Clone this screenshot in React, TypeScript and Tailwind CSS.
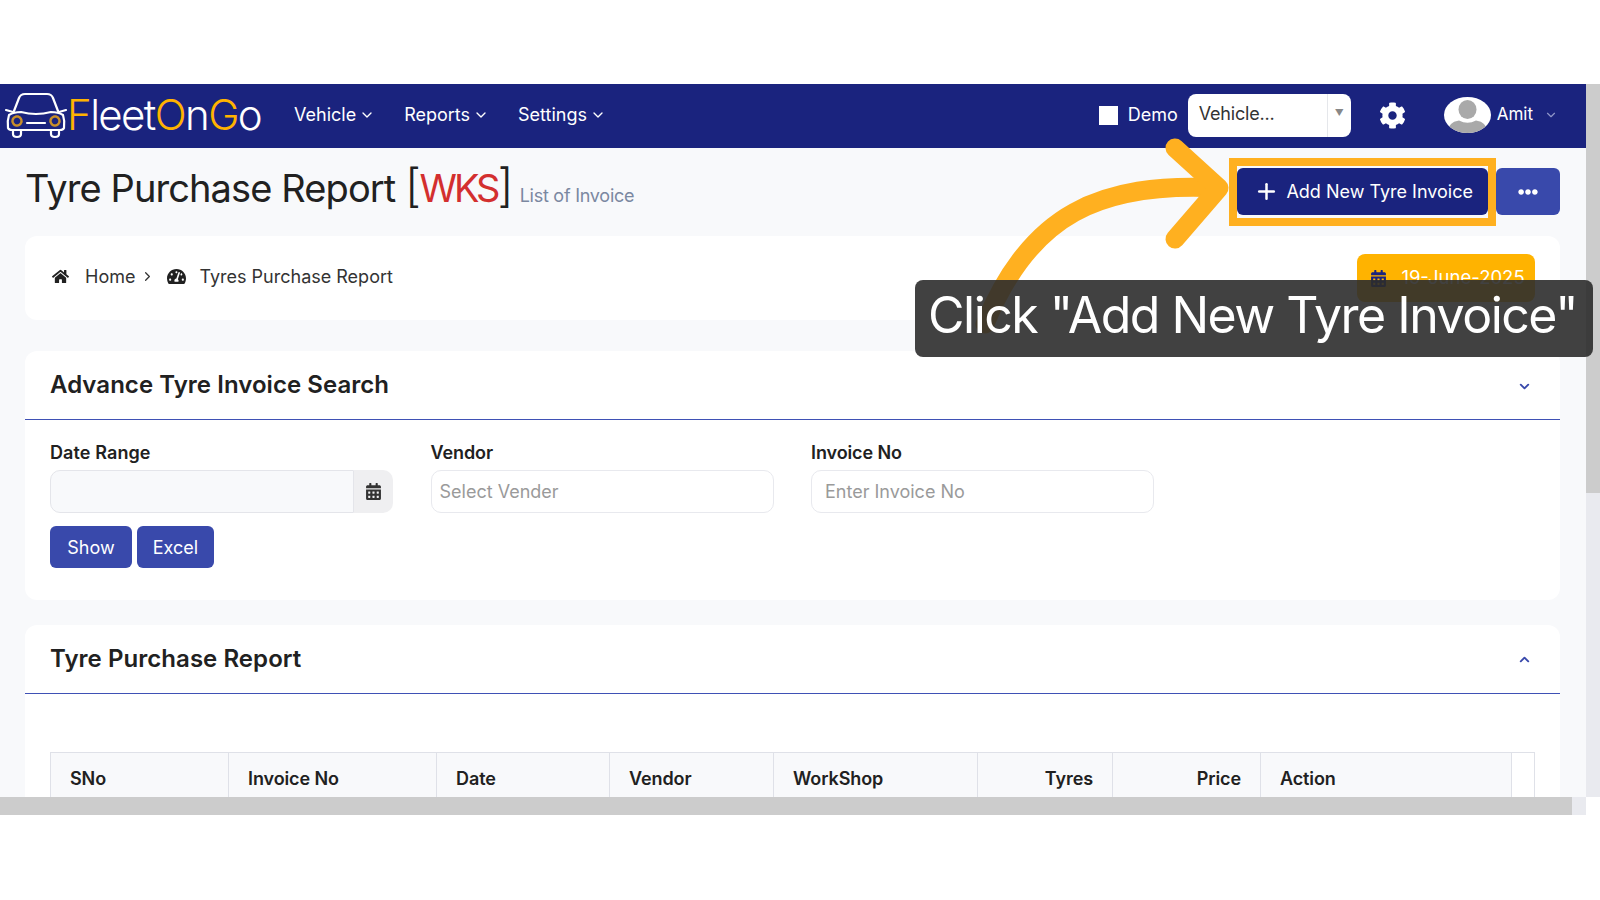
import React from "react";
import { FaHome, FaTachometerAlt, FaCalendarAlt, FaCog, FaEllipsisH } from "react-icons/fa";
import { ChevronDown, ChevronUp, ChevronRight, Plus } from "lucide-react";

const font = { fontFamily: "Inter, 'Liberation Sans', sans-serif" };

const columns = [
  { label: "SNo", width: "w-[178px]" },
  { label: "Invoice No", width: "w-[208px]" },
  { label: "Date", width: "w-[173px]" },
  { label: "Vendor", width: "w-[164px]" },
  { label: "WorkShop", width: "w-[204px]" },
  { label: "Tyres", width: "w-[135px]", right: true },
  { label: "Price", width: "w-[148px]", right: true },
  { label: "Action", width: "w-[251px]" },
];

function CarLogo() {
  return (
    <svg width="62" height="48" viewBox="0 0 62 48" fill="none" stroke="#fff" strokeWidth="2.2" strokeLinecap="round" strokeLinejoin="round">
      <path d="M9 20 L14 7 Q15.5 3 20 3 H42 Q46.5 3 48 7 L53 20" />
      <path d="M4 24 Q9 21 16 21 Q31 25 46 21 Q53 21 58 24 Q60 30 59 37 Q58 39 55 39 H7 Q4 39 3 37 Q2 30 4 24 Z" />
      <path d="M22 32 H40" />
      <path d="M8 39 V43 Q8 46 12 46 Q16 46 16 43 V39" />
      <path d="M46 39 V43 Q46 46 50 46 Q54 46 54 43 V39" />
      <path d="M1 19 L8 21 M61 19 L54 21" />
      <circle cx="12" cy="30" r="4.5" stroke="#c98f2a" strokeWidth="2.5" strokeDasharray="1.5 1" />
      <circle cx="50" cy="30" r="4.5" stroke="#c98f2a" strokeWidth="2.5" strokeDasharray="1.5 1" />
    </svg>
  );
}

function Avatar() {
  return (
    <svg className="w-[47px] h-[36px]" viewBox="0 0 47 36" preserveAspectRatio="none">
      <defs>
        <clipPath id="avatar-clip">
          <ellipse cx="23.5" cy="18" rx="23.5" ry="18" />
        </clipPath>
      </defs>
      <ellipse cx="23.5" cy="18" rx="23.5" ry="18" fill="#fff" />
      <g clipPath="url(#avatar-clip)" fill="#a9a9a9">
        <ellipse cx="23.5" cy="12.5" rx="9" ry="9.5" />
        <path d="M3 36 Q4 25 15 23.5 Q23.5 28 32 23.5 Q43 25 44 36 Z" />
      </g>
    </svg>
  );
}

function Navbar() {
  return (
    <nav className="h-[64px] shrink-0 bg-[#1a237e] flex items-center pl-[5px] pr-[28px] pb-[2px] text-white">
      <CarLogo />
      <div className="w-[195px] text-[42px] font-light leading-none tracking-[-1.6px] whitespace-nowrap">
        <span className="text-[#ffb300]">F</span>leet<span className="text-[#ffb300]">O</span>n<span className="text-[#ffb300]">G</span>o
      </div>
      <div className="ml-[32px] flex items-center gap-[29px] text-[18px]">
        {["Vehicle", "Reports", "Settings"].map((item) => (
          <span key={item} className="flex items-center gap-[3px] pb-[1px]">
            {item}
            <ChevronDown size={16} />
          </span>
        ))}
      </div>
      <div className="ml-auto flex items-center">
        <span className="w-[19px] h-[19px] bg-white" />
        <span className="ml-[10px] pb-[2px] text-[18px]">Demo</span>
        <div className="ml-[10px] w-[163px] h-[43px] bg-white rounded-lg flex items-center text-[#333] text-[18px]">
          <span className="flex-1 pl-[11px] pb-[3px] tracking-[-0.2px]">Vehicle...</span>
          <span className="w-[24px] h-full border-l border-gray-200 flex items-center justify-center pb-[4px] text-[9px] text-[#888]">▼</span>
        </div>
        <FaCog className="ml-[28px]" size={27} />
        <div className="ml-[38px]">
          <Avatar />
        </div>
        <span className="ml-[6px] text-[17px]">Amit</span>
        <ChevronDown className="ml-[11px] text-[#8f96c9]" size={14} />
      </div>
    </nav>
  );
}

function Panel({ title, open, children }: { title: string; open?: boolean; children: React.ReactNode }) {
  return (
    <section className="bg-white rounded-xl">
      <div className="h-[69px] border-b border-[#3f51b5] flex items-center justify-between pl-[25px] pr-[28px]">
        <h2 className="text-[24px] font-semibold text-[#212121] tracking-[0.05px]">{title}</h2>
        {open ? <ChevronUp size={15} strokeWidth={3} className="text-[#3949ab]" /> : <ChevronDown size={15} strokeWidth={3} className="mt-[3px] text-[#3949ab]" />}
      </div>
      {children}
    </section>
  );
}

function Field({ label, placeholder, indent }: { label: string; placeholder: string; indent: string }) {
  return (
    <div className="w-[343px]">
      <label className="block text-[18px] font-semibold text-[#212121] leading-[22px] tracking-[-0.1px]">{label}</label>
      <div className={`mt-[6px] h-[43px] bg-white border border-[#e8e9ee] rounded-[10px] flex items-center ${indent} text-[18px] text-[#9a9a9a]`}>
        {placeholder}
      </div>
    </div>
  );
}

export default function App() {
  return (
    <div className="w-full h-[900px] bg-white overflow-hidden" style={font}>
      <div className="h-[84px]" />
      <div className="relative h-[731px] flex flex-col">
        <div className="flex-1 min-h-0 flex">
          <main className="flex-1 min-w-0 bg-[#f8f9fb] flex flex-col overflow-hidden">
            <Navbar />
            <div className="relative pl-[25px] pr-[26px] flex-1">
              {/* Heading */}
              <div className="h-[88px] flex items-start justify-between">
                <div className="flex items-baseline mt-[14px] whitespace-nowrap">
                  <h1 className="text-[38px] leading-[50px] text-[#212121] tracking-[-0.9px]">
                    Tyre Purchase Report <span className="text-[46px] font-light leading-none tracking-[-1.6px]">[</span><span className="text-[#d32f2f] tracking-[-3px]">WKS</span><span className="text-[46px] font-light leading-none">]</span>
                  </h1>
                  <span className="ml-[7px] text-[18px] tracking-[-0.25px] text-[#7b88a1]">List of Invoice</span>
                </div>
                <div className="flex mt-[20px]">
                  <button className="w-[251px] h-[47px] mr-[8px] pr-[15px] bg-[#1a237e] rounded-md text-white text-[18px] flex items-center justify-end gap-[7px]">
                    <Plus size={25} strokeWidth={2.4} />
                    Add New Tyre Invoice
                  </button>
                  <button className="w-[64px] h-[47px] bg-[#3949ab] rounded-md text-white flex items-center justify-center">
                    <FaEllipsisH size={20} />
                  </button>
                </div>
              </div>

              {/* Breadcrumb */}
              <div className="h-[84px] bg-white rounded-xl flex items-center justify-between pl-[27px] pr-[25px] text-[18px] text-[#333]">
                <div className="flex items-center mb-[4px]">
                  <FaHome size={17} className="text-[#212121]" />
                  <span className="ml-[16px]">Home</span>
                  <ChevronRight size={15} className="ml-[5px]" />
                  <FaTachometerAlt size={19} className="ml-[12px] text-[#212121]" />
                  <span className="ml-[13px]">Tyres Purchase Report</span>
                </div>
                <div className="h-[48px] w-[178px] bg-[#ffb300] rounded-lg flex items-center justify-center gap-[14px] pl-[3px] text-white text-[18.5px]">
                  <FaCalendarAlt size={17} className="text-[#1a237e]" />
                  19-June-2025
                </div>
              </div>

              {/* Search */}
              <div className="mt-[31px]">
                <Panel title="Advance Tyre Invoice Search">
                  <div className="h-[180px] pl-[25px] pt-[22px]">
                    <div className="flex gap-[37.5px]">
                      <div className="w-[343px]">
                        <label className="block text-[18px] font-semibold text-[#212121] leading-[22px] tracking-[0.1px]">Date Range</label>
                        <div className="mt-[6px] h-[43px] flex">
                          <div className="w-[304px] bg-[#f8f9fb] border border-[#e4e5ea] rounded-l-[10px]" />
                          <div className="flex-1 bg-[#efeff1] rounded-r-[10px] flex items-center justify-center text-[#333]">
                            <FaCalendarAlt size={17} />
                          </div>
                        </div>
                      </div>
                      <Field label="Vendor" placeholder="Select Vender" indent="pl-[8px]" />
                      <Field label="Invoice No" placeholder="Enter Invoice No" indent="pl-[13px]" />
                    </div>
                    <div className="mt-[13px] flex gap-[5px] text-white text-[18px]">
                      <button className="w-[82px] h-[42px] bg-[#3949ab] rounded-md">Show</button>
                      <button className="w-[77px] h-[42px] bg-[#3949ab] rounded-md">Excel</button>
                    </div>
                  </div>
                </Panel>
              </div>

              {/* Report */}
              <div className="mt-[25px]">
                <Panel title="Tyre Purchase Report" open>
                  <div className="pt-[58px] px-[25px] h-[200px]">
                    <div className="flex w-[1485px] border border-[#dfe1e8]">
                      {columns.map((col) => (
                        <div
                          key={col.label}
                          className={`${col.width} h-[50px] bg-[#f8f9fb] border-r border-[#dfe1e8] flex items-center px-[19px] text-[18px] font-semibold text-[#212121] tracking-[-0.1px] ${col.right ? "justify-end" : ""}`}
                        >
                          {col.label}
                        </div>
                      ))}
                    </div>
                  </div>
                </Panel>
              </div>
            </div>
          </main>
          {/* Vertical scrollbar */}
          <div className="w-[14px] shrink-0 bg-[#e9eaef]">
            <div className="h-[409px] bg-[#cccccc]" />
          </div>
        </div>
        {/* Horizontal scrollbar */}
        <div className="h-[18px] shrink-0 flex">
          <div className="w-[1572px] bg-[#cccccc]" />
          <div className="w-[14px] bg-[#e9eaef]" />
        </div>

        {/* Tutorial overlay: orange highlight, arrow, caption */}
        <div className="absolute left-[1229px] top-[74px] w-[267px] h-[68px] border-[8px] border-[#ffb020]" />
        <svg className="absolute left-0 top-0 w-full h-full pointer-events-none" fill="none" stroke="#ffb020" strokeWidth="19" strokeLinecap="round" strokeLinejoin="round">
          <path d="M985 240 C1030 130 1100 98 1218 104" />
          <path d="M1175 64 L1219 104 L1175 155" />
        </svg>
        <div className="absolute left-[915px] top-[196px] w-[678px] h-[77px] bg-[#2c2c2c]/90 rounded-lg flex items-center pl-[13px] pb-[6px] text-white text-[50px] whitespace-nowrap tracking-[-1.5px]">
          Click "Add New Tyre Invoice"
        </div>
      </div>
    </div>
  );
}
